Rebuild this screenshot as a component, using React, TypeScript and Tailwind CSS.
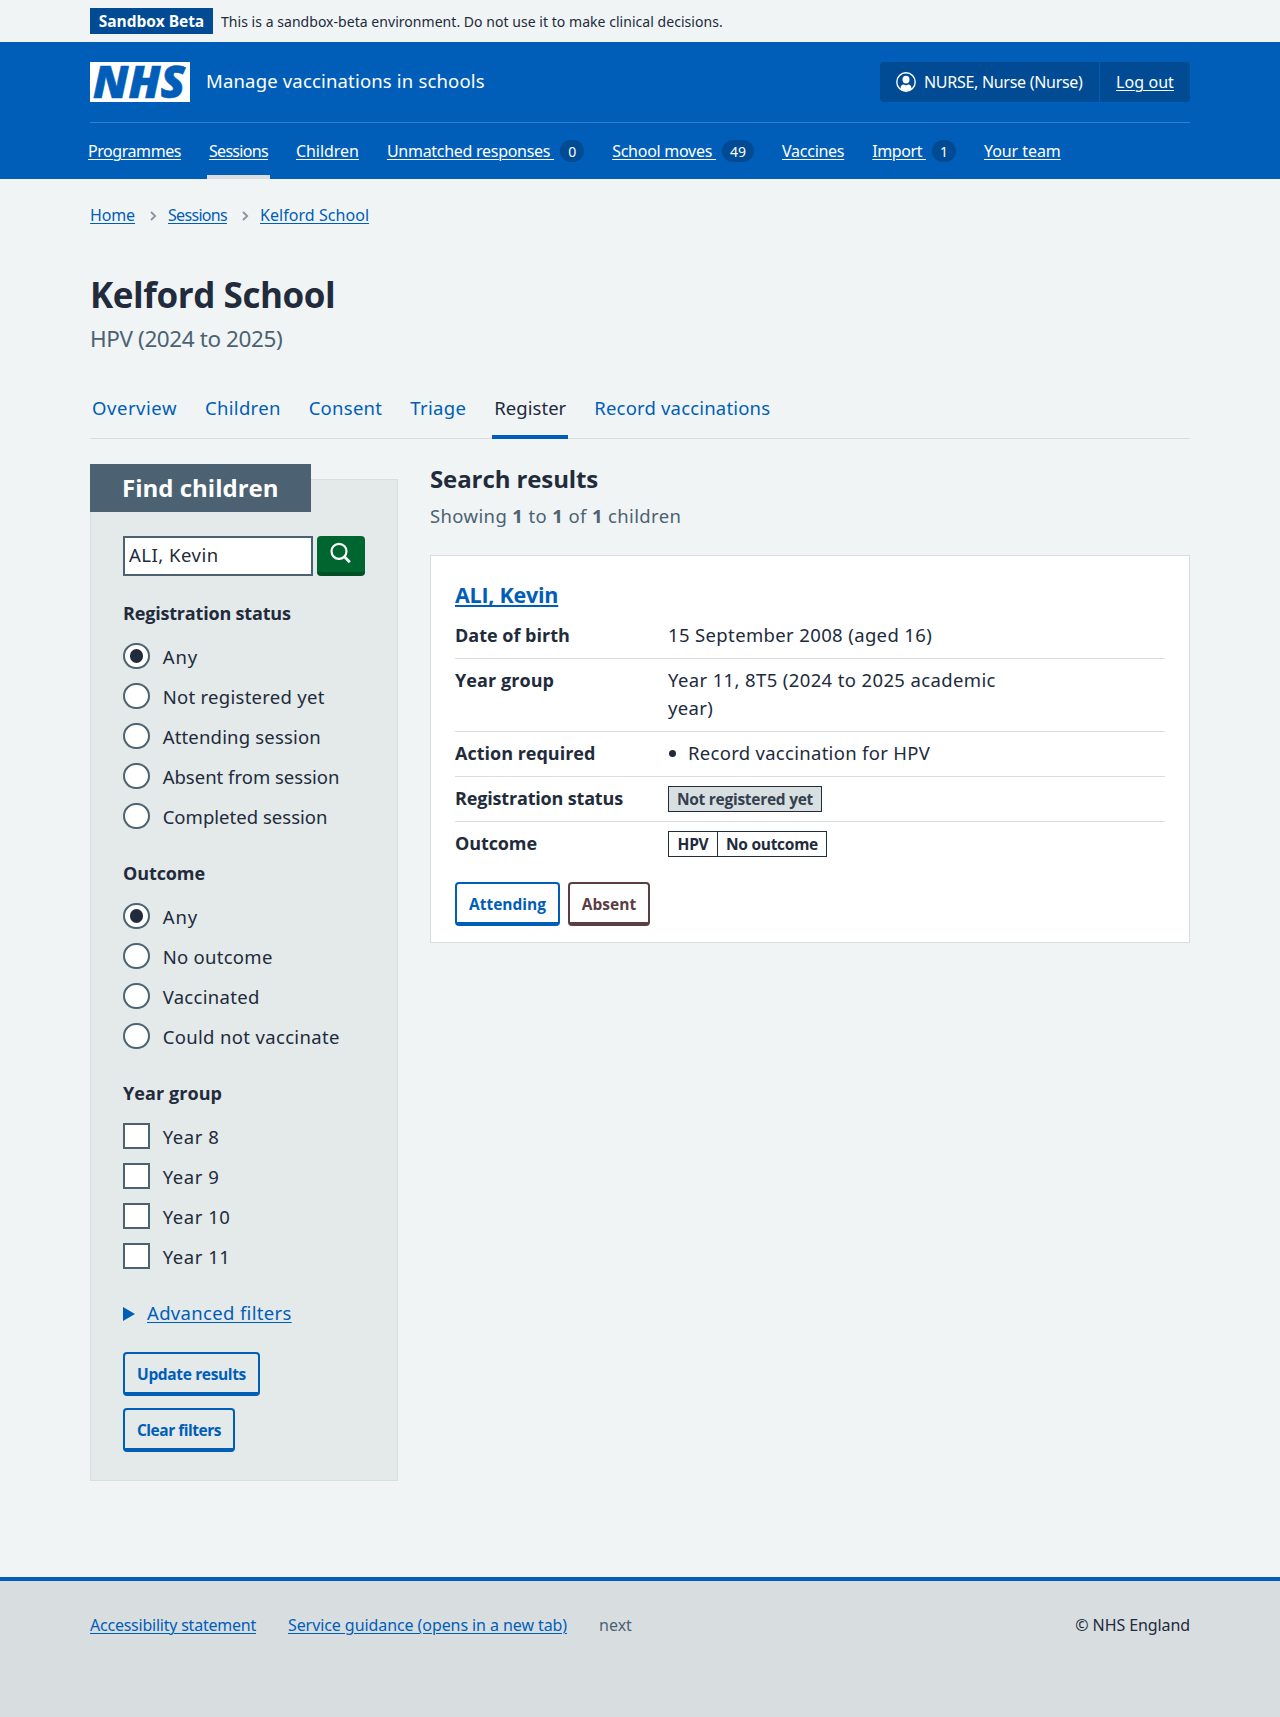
import type { ReactNode } from "react";

const navItems = [
  { label: "Programmes", tracking: "tracking-[-0.44px]" },
  { label: "Sessions", tracking: "tracking-[-0.69px]", active: true },
  { label: "Children", tracking: "tracking-[-0.04px]" },
  { label: "Unmatched responses ", tracking: "tracking-[-0.28px]", count: "0" },
  { label: "School moves ", tracking: "tracking-[-0.26px]", count: "49" },
  { label: "Vaccines", tracking: "tracking-[-0.27px]" },
  { label: "Import ", tracking: "tracking-[-0.4px]", count: "1" },
  { label: "Your team", tracking: "tracking-[-0.06px]" },
];

const tabs = [
  { label: "Overview", tracking: "tracking-[0.54px]" },
  { label: "Children", tracking: "tracking-[0.3px]" },
  { label: "Consent", tracking: "tracking-[0.27px]" },
  { label: "Triage", tracking: "tracking-[0.34px]" },
  { label: "Register", tracking: "tracking-[0.04px]", active: true },
  { label: "Record vaccinations", tracking: "tracking-[0.18px]" },
];

type Option = { label: string; tracking: string };

const registrationOptions: Option[] = [
  { label: "Any", tracking: "tracking-[0.9px]" },
  { label: "Not registered yet", tracking: "tracking-[0.28px]" },
  { label: "Attending session", tracking: "tracking-[0.18px]" },
  { label: "Absent from session", tracking: "tracking-[0px]" },
  { label: "Completed session", tracking: "tracking-[0.02px]" },
];

const outcomeOptions: Option[] = [
  { label: "Any", tracking: "tracking-[0.9px]" },
  { label: "No outcome", tracking: "tracking-[0.28px]" },
  { label: "Vaccinated", tracking: "tracking-[0.3px]" },
  { label: "Could not vaccinate", tracking: "tracking-[0.34px]" },
];

const yearOptions: Option[] = [
  { label: "Year 8", tracking: "tracking-[0.55px]" },
  { label: "Year 9", tracking: "tracking-[0.55px]" },
  { label: "Year 10", tracking: "tracking-[0.55px]" },
  { label: "Year 11", tracking: "tracking-[0.55px]" },
];

const link = "underline decoration-1 underline-offset-2";

function Logo() {
  return (
    <svg width="100" height="40" viewBox="0 0 100 40" role="img" aria-label="NHS" className="overflow-visible">
      <rect width="100" height="40" fill="#fff" />
      <text
        x="3"
        y="36"
        textLength="92"
        lengthAdjust="spacingAndGlyphs"
        fill="#005eb8"
        stroke="#005eb8"
        strokeWidth="0.6"
        className="font-['Open_Sans'] text-[44.5px] font-extrabold italic"
      >
        NHS
      </text>
    </svg>
  );
}

function UserIcon() {
  return (
    <svg width="20" height="20" viewBox="0 0 20 20" fill="none" className="-mt-[1px]">
      <defs>
        <clipPath id="user-clip">
          <circle cx="10" cy="10" r="9" />
        </clipPath>
      </defs>
      <circle cx="10" cy="10" r="9.2" stroke="#fff" strokeWidth="1.4" />
      <g clipPath="url(#user-clip)" fill="#fff">
        <ellipse cx="10" cy="7.6" rx="3.5" ry="3.9" />
        <path d="M4.600 20v-4c0-2 1.200-3.400 3-3.400 1.500 1 3.300 1 4.800 0 1.800 0 3 1.400 3 3.400v4z" />
      </g>
    </svg>
  );
}

function FieldGroup({
  title,
  tracking,
  options,
  kind,
}: {
  title: string;
  tracking: string;
  options: Option[];
  kind: "radio" | "checkbox";
}) {
  return (
    <fieldset className="mt-[22px]">
      <legend className={`h-7 font-['Open_Sans'] text-[18px] leading-7 font-bold ${tracking}`}>{title}</legend>
      <div className="pt-[10px]">
        {options.map((option, index) => (
          <label key={option.label} className="flex h-10 items-start">
            <span
              className={`mt-[5.7px] flex size-[26.66px] items-center justify-center border-2 border-[#4c6272] bg-white ${
                kind === "radio" ? "rounded-full" : ""
              }`}
            >
              {kind === "radio" && index === 0 && <span className="size-[13.4px] rounded-full bg-[#212b3c]" />}
            </span>
            <span className={`ml-[13px] text-[18.5px] leading-10 ${option.tracking}`}>{option.label}</span>
          </label>
        ))}
      </div>
    </fieldset>
  );
}

function SecondaryButton({ children, className }: { children: string; className: string }) {
  return (
    <button
      type="button"
      className={`flex h-11 items-center justify-center rounded-[4px] border-2 border-b-4 pt-[2px] font-['Open_Sans'] text-[15.5px] leading-6 font-bold ${className}`}
    >
      {children}
    </button>
  );
}

function SummaryRow({
  title,
  tracking,
  last,
  children,
}: {
  title: string;
  tracking: string;
  last?: boolean;
  children: ReactNode;
}) {
  return (
    <div className={`flex pt-[7px] pb-[9px] leading-7 ${last ? "" : "border-b border-[#d8dde0]"}`}>
      <dt className={`w-[213px] font-['Open_Sans'] text-[18px] leading-7 font-bold ${tracking}`}>{title}</dt>
      <dd className="w-[345px]">{children}</dd>
    </div>
  );
}

function Count() {
  return <b className="font-['Open_Sans'] font-bold">1</b>;
}

function Chevron() {
  return (
    <span className="flex h-6 w-[33px] items-center pl-[15px]">
      <svg width="7" height="10" viewBox="0 0 7 10" fill="none" stroke="#8895a0" strokeWidth="1.800" className="mt-[2px]">
        <path d="M1 1L5.200 5L1 9" />
      </svg>
    </span>
  );
}

export default function App() {
  return (
    <div className="flex min-h-[1717px] flex-col bg-[#f0f4f5] font-['Noto_Sans',sans-serif] text-[#212b3c]">
      <div className="mx-auto flex h-[42px] w-[1100px] items-center gap-2">
        <strong className="h-[26px] w-[123px] bg-[#004b93] text-center font-['Open_Sans'] text-[15.5px] leading-[27px] font-bold tracking-[-0.05px] text-white">
          Sandbox Beta
        </strong>
        <span className="pt-[2px] text-[14px] leading-5 tracking-[0.04px]">
          This is a sandbox-beta environment. Do not use it to make clinical decisions.
        </span>
      </div>

      <header className="h-[137px] bg-[#005eb8] text-white">
        <div className="mx-auto w-[1100px]">
          <div className="flex h-20 items-center">
            <Logo />
            <span className="ml-4 pb-[2px] text-[18.5px] leading-7 tracking-[0.17px]">Manage vaccinations in schools</span>
            <div className="ml-auto flex h-10 w-[310px] overflow-hidden rounded-[4px] bg-[#004b93] text-[16px] leading-10">
              <div className="flex w-[220px] items-center border-r border-[#005eb8] pl-4">
                <UserIcon />
                <span className="ml-2 tracking-[-0.29px]">NURSE, Nurse (Nurse)</span>
              </div>
              <a className={`pl-4 tracking-[0.08px] ${link}`}>Log out</a>
            </div>
          </div>
          <nav className="border-t border-[#337ec6]">
            <ul className="-ml-[2px] flex h-14 gap-7 text-[16px]">
              {navItems.map((item) => (
                <li
                  key={item.label}
                  className={`flex items-center ${
                    item.active ? "-mx-[2px] border-b-4 border-[#d8dde0] px-[2px] pt-1" : ""
                  }`}
                >
                  <a className={`whitespace-pre leading-6 ${link} ${item.tracking}`}>{item.label}</a>
                  {item.count && (
                    <span className="ml-[6px] h-[22px] min-w-6 rounded-full bg-[#004b93] px-2 text-center text-[14px] leading-[23px]">
                      {item.count}
                    </span>
                  )}
                </li>
              ))}
            </ul>
          </nav>
        </div>
      </header>

      <main className="mx-auto w-[1100px]">
        <nav className="flex h-12 items-end text-[16px] leading-6 text-[#005eb8]">
          <a className={`w-[45px] tracking-[-0.13px] ${link}`}>Home</a>
          <Chevron />
          <a className={`w-[59px] tracking-[-0.69px] ${link}`}>Sessions</a>
          <Chevron />
          <a className={`tracking-[0.05px] ${link}`}>Kelford School</a>
        </nav>

        <h1 className="mt-[46px] font-['Open_Sans'] text-[35px] leading-[44px] font-bold tracking-[-0.42px]">Kelford School</h1>
        <p className="mt-[6px] text-[22.5px] leading-8 tracking-[-0.4px] text-[#4c6272]">HPV (2024 to 2025)</p>

        <nav className="mt-[39px] flex gap-6 border-b border-[#d8dde0] text-[18.5px] leading-7">
          {tabs.map((tab) => (
            <a
              key={tab.label}
              className={`-mb-px h-[45px] border-b-4 px-[2px] ${tab.tracking} ${
                tab.active ? "border-[#005eb8]" : "border-transparent text-[#005eb8]"
              }`}
            >
              {tab.label}
            </a>
          ))}
        </nav>

        <div className="flex items-start gap-8 pt-6">
          <section className="mt-4 h-[1002px] w-[308px] border border-[#d8dde0] bg-[#e4e9e9] px-8">
            <h2 className="-mt-4 -ml-[33px] h-12 w-[221px] bg-[#4c6272] pl-8 font-['Open_Sans'] text-[24px] leading-[47px] font-bold text-white">
              Find children
            </h2>
            <div className="mt-6 mb-[23px] flex gap-1">
              <input
                defaultValue="ALI, Kevin"
                className="h-10 w-[190px] border-2 border-[#4c6272] bg-white px-1 pb-[3px] text-[18.5px] tracking-[0.5px]"
              />
              <button
                type="button"
                className="flex h-10 w-12 justify-center rounded-[4px] border-b-4 border-[#004f25] bg-[#00662f] pt-[6px]"
              >
                <svg width="22" height="22" viewBox="0 0 22 22" fill="none" stroke="#fff" strokeWidth="2.200">
                  <circle cx="9" cy="9.300" r="7.500" />
                  <path d="M14.200 14.600L19.800 20.200" strokeWidth="2.800" />
                </svg>
              </button>
            </div>
            <FieldGroup title="Registration status" tracking="tracking-[-0.18px]" options={registrationOptions} kind="radio" />
            <FieldGroup title="Outcome" tracking="tracking-[-0.1px]" options={outcomeOptions} kind="radio" />
            <FieldGroup title="Year group" tracking="tracking-[0.07px]" options={yearOptions} kind="checkbox" />
            <div className="mt-[22px] flex items-center text-[18.5px] leading-7 text-[#005eb8]">
              <svg width="12" height="14" viewBox="0 0 12 14" className="mt-[2px]">
                <path d="M0 0L12 7L0 14Z" fill="#005eb8" />
              </svg>
              <span className={`ml-3 tracking-[0.33px] ${link}`}>Advanced filters</span>
            </div>
            <SecondaryButton className="mt-[25px] w-[137px] border-[#005eb8] tracking-[-0.35px] text-[#005eb8]">
              Update results
            </SecondaryButton>
            <SecondaryButton className="mt-3 w-[112px] border-[#005eb8] tracking-[-0.48px] text-[#005eb8]">
              Clear filters
            </SecondaryButton>
          </section>

          <section className="w-[760px]">
            <h2 className="font-['Open_Sans'] text-[24px] leading-8 font-bold tracking-[-0.1px]">Search results</h2>
            <p className="mt-[7px] text-[18.5px] leading-7 tracking-[0.37px] text-[#4c6272]">
              Showing <Count /> to <Count /> of <Count /> children
            </p>
            <article className="mt-[25px] h-[388px] border border-[#d8dde0] bg-white px-6 pt-[25px] text-[18.5px]">
              <h3 className="font-['Open_Sans'] text-[21.5px] leading-7 font-bold tracking-[-0.25px]">
                <a className="text-[#005eb8] underline decoration-2 underline-offset-2 [text-decoration-skip-ink:none]">
                  ALI, Kevin
                </a>
              </h3>
              <dl className="mt-[5px]">
                <SummaryRow title="Date of birth" tracking="tracking-[0px]">
                  <span className="tracking-[0.36px]">15 September 2008 (aged 16)</span>
                </SummaryRow>
                <SummaryRow title="Year group" tracking="tracking-[0.07px]">
                  <span className="tracking-[0.37px]">Year 11, 8T5 (2024 to 2025 academic year)</span>
                </SummaryRow>
                <SummaryRow title="Action required" tracking="tracking-[0px]">
                  <span className="flex items-center">
                    <span className="ml-[1px] size-[7px] rounded-full bg-[#212b3c]" />
                    <span className="ml-3 tracking-[0.29px]">Record vaccination for HPV</span>
                  </span>
                </SummaryRow>
                <SummaryRow title="Registration status" tracking="tracking-[-0.17px]">
                  <span className="mt-[2px] flex h-[26px] w-[154px] items-center justify-center border border-[#212b3c] bg-[#d8dfe1] font-['Open_Sans'] text-[15.5px] leading-6 font-bold tracking-[-0.27px] text-[#353f50]">
                    Not registered yet
                  </span>
                </SummaryRow>
                <SummaryRow title="Outcome" tracking="tracking-[-0.1px]" last>
                  <span className="mt-[2px] flex h-[26px] w-[159px] border border-[#212b3c] bg-white text-center font-['Open_Sans'] text-[15.5px] leading-6 font-bold tracking-[-0.27px]">
                    <span className="w-12">HPV</span>
                    <span className="flex-1 border-l border-[#212b3c]">No outcome</span>
                  </span>
                </SummaryRow>
              </dl>
              <div className="mt-4 flex gap-2">
                <SecondaryButton className="w-[105px] border-[#005eb8] text-[#005eb8]">Attending</SecondaryButton>
                <SecondaryButton className="w-[82px] border-[#5c3d42] text-[#5c3d42]">Absent</SecondaryButton>
              </div>
            </article>
          </section>
        </div>
      </main>

      <footer className="mt-24 flex-1 border-t-4 border-[#005eb8] bg-[#d8dde0]">
        <div className="mx-auto flex w-[1100px] gap-8 pt-8 text-[16px] leading-6">
          <a className={`tracking-[-0.23px] text-[#005eb8] ${link}`}>Accessibility statement</a>
          <a className={`tracking-[-0.08px] text-[#005eb8] ${link}`}>Service guidance (opens in a new tab)</a>
          <span className="text-[#4c6272]">next</span>
          <span className="ml-auto tracking-[-0.09px]">© NHS England</span>
        </div>
      </footer>
    </div>
  );
}
